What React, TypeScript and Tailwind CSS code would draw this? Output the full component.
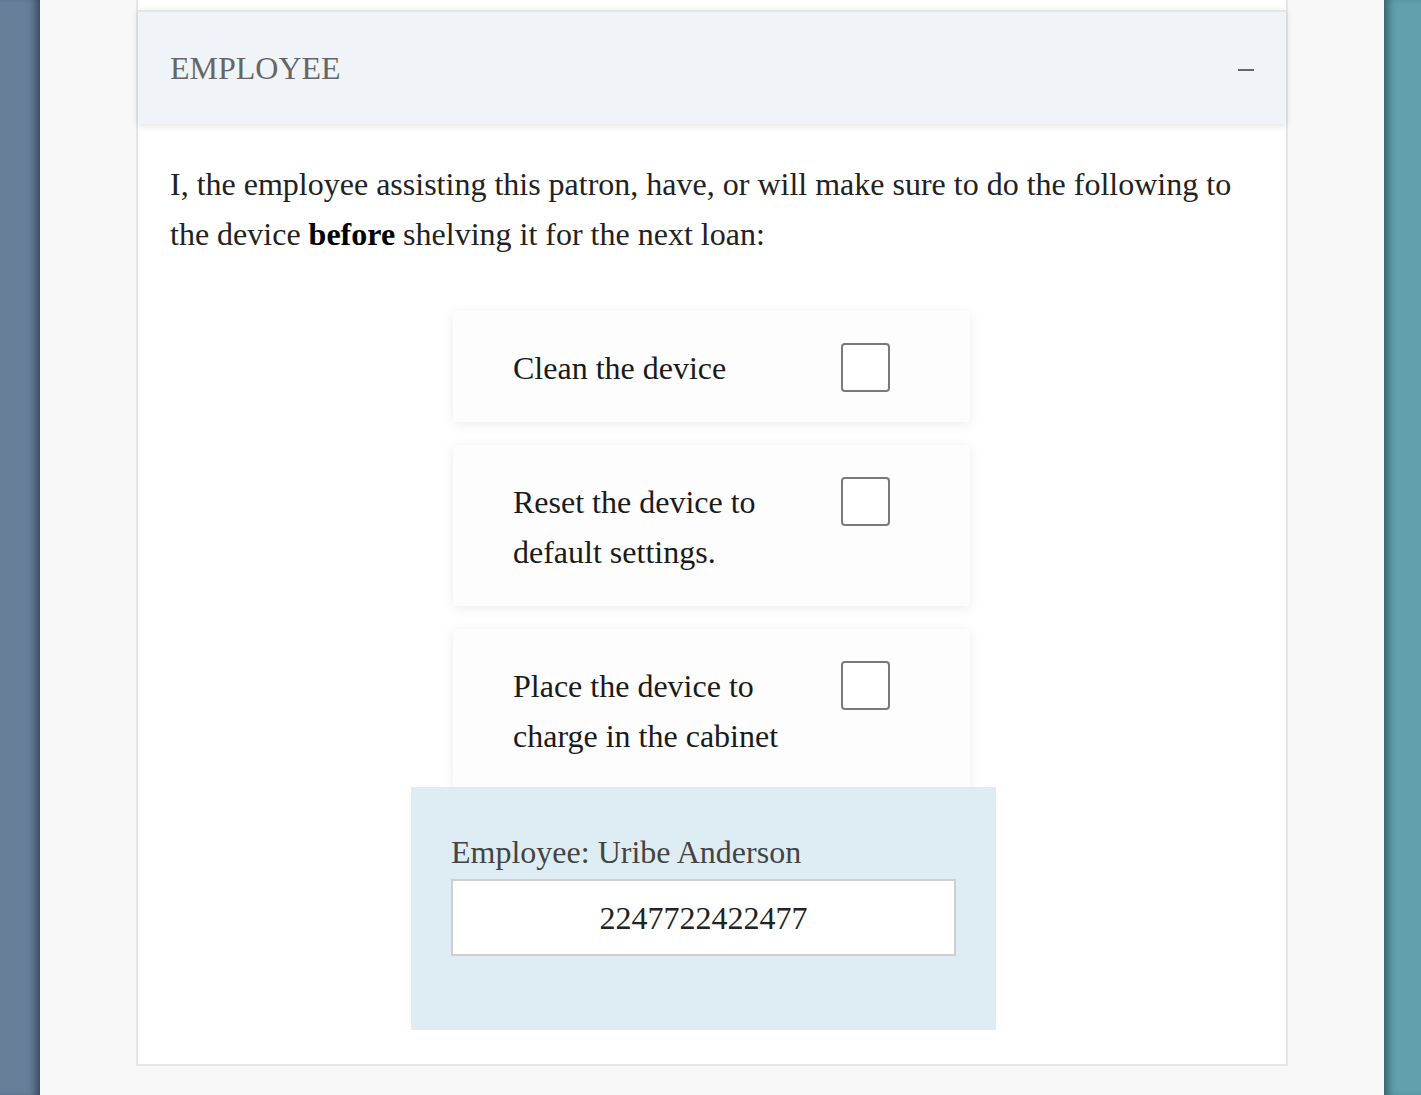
const tasks = [
  { label: "Clean the device", pb: "pb-[29px]" },
  { label: "Reset the device to default settings.", pb: "pb-[29px]" },
  { label: "Place the device to charge in the cabinet", pb: "pb-[26px]" },
];

function ChecklistItem({ label, pb }: { label: string; pb: string }) {
  return (
    <div
      className={`flex items-start bg-[#fdfdfd] pl-[60px] pt-[32px] ${pb} shadow-[0_2px_12px_rgba(0,0,0,0.08)]`}
    >
      <p className="w-[300px] text-[32px] leading-[50px] text-[#1a1a1a]">{label}</p>
      <span className="ml-[28px] block h-[49px] w-[49px] rounded-[4px] border-2 border-[#7a7a7a] bg-white" />
    </div>
  );
}

export default function App() {
  return (
    <div
      className="flex min-h-[1095px] w-full bg-[#f8f8f8]"
      style={{ fontFamily: '"Liberation Serif", "Times New Roman", serif' }}
    >
      <div className="w-[40px] shrink-0 bg-[#677f99] shadow-[inset_-9px_0_8px_-5px_rgba(20,30,50,0.6)]" />

      <main className="flex-1 px-[96px]">
        <section className="border-x-2 border-b-2 border-[#e6e6e6] bg-white pt-[10px] pb-[34px]">
          <header className="flex h-[114px] items-center justify-between border-t-2 border-[#e4e4e4] bg-[#f0f4f8] pl-[32px] pr-[32px] shadow-[0_2px_8px_rgba(0,0,0,0.12)]">
            <h2 className="text-[32px] leading-none text-[#666]">EMPLOYEE</h2>
            <span className="mt-[3px] block h-[2px] w-[16px] bg-[#666]" />
          </header>

          <p className="mt-[35px] px-[32px] text-[32px] leading-[50px] text-[#222]">
            I, the employee assisting this patron, have, or will make sure to do the following to
            the device <strong className="font-bold text-black">before</strong> shelving it for the
            next loan:
          </p>

          <div className="mt-[52px] ml-[315px] flex w-[517px] flex-col gap-[23px]">
            {tasks.map((t) => (
              <ChecklistItem key={t.label} label={t.label} pb={t.pb} />
            ))}
          </div>

          <div className="relative ml-[273px] w-[585px] bg-[#deedf4] px-[40px] pt-[45px] pb-[74px]">
            <label className="block text-[32px] leading-[40px] text-[#444]">
              Employee: Uribe Anderson
            </label>
            <div className="mt-[7px] flex h-[77px] w-[505px] items-center justify-center border-2 border-[#cfcfcf] bg-white text-[32px] text-[#222]">
              2247722422477
            </div>
          </div>
        </section>
      </main>

      <div className="w-[37px] shrink-0 bg-[#62a0ad] shadow-[inset_9px_0_8px_-5px_rgba(20,50,60,0.6)]" />
    </div>
  );
}
